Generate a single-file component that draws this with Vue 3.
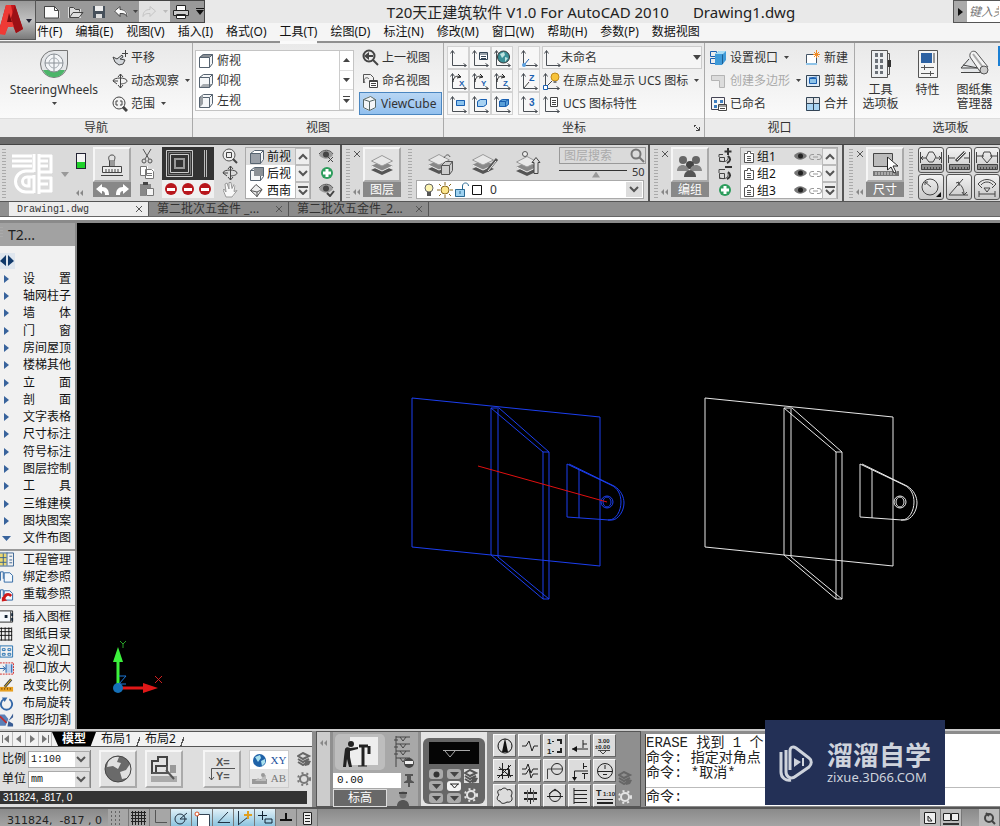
<template>
  <div class="app">
    <header class="titlebar">
      <button class="app-btn" aria-label="AutoCAD"><Icon name="acad" /></button>
      <div class="quick">
        <button aria-label="新建"><Icon name="newDoc" /></button>
        <button aria-label="打开"><Icon name="open" /></button>
        <button aria-label="保存"><Icon name="save" /></button>
        <button aria-label="放弃"><Icon name="undo" /></button>
        <Icon name="caret" />
        <span class="redo">
          <button aria-label="重做"><Icon name="redo" /></button>
          <Icon name="caretPale" />
        </span>
        <button aria-label="打印"><Icon name="print" /></button>
        <Icon name="caretBar" />
      </div>
      <h1 class="title">
        <span>T20天正建筑软件 V1.0 For AutoCAD 2010</span>
        <span>Drawing1.dwg</span>
      </h1>
      <div class="help-search">
        <button aria-label="展开"><Icon name="right" /></button>
        <input type="text" placeholder="键入关键字" aria-label="搜索" />
      </div>
    </header>

    <nav class="menubar">
      <a
        v-for="m in menus"
        :key="m"
        href="#"
        :class="{ open: m === '工具(T)' }"
        >{{ m }}</a
      >
    </nav>

    <section class="ribbon">
      <div class="panel nav-panel">
        <div class="panel-body">
          <button class="big wheel">
            <Icon name="wheel" />
            <span>SteeringWheels</span>
            <Icon name="caret" />
          </button>
          <div class="rows">
            <button class="row"><Icon name="pan" />平移</button>
            <button class="row">
              <Icon name="orbit" />动态观察<Icon name="caret" />
            </button>
            <button class="row">
              <Icon name="extents" />范围<Icon name="caret" />
            </button>
          </div>
        </div>
        <h2>导航</h2>
      </div>

      <div class="panel view-panel">
        <div class="panel-body">
          <div class="gallery">
            <ul>
              <li v-for="v in views" :key="v.name">
                <Icon :name="v.icon" />{{ v.name }}
              </li>
            </ul>
            <div class="gallery-scroll">
              <button aria-label="上"><Icon name="up" /></button>
              <button aria-label="下"><Icon name="down" /></button>
              <button aria-label="更多"><Icon name="more" /></button>
            </div>
          </div>
          <div class="rows">
            <button class="row"><Icon name="prevView" />上一视图</button>
            <button class="row"><Icon name="namedView" />命名视图</button>
            <button class="row active"><Icon name="cube" />ViewCube</button>
          </div>
        </div>
        <h2>视图</h2>
      </div>

      <div class="panel ucs-panel">
        <div class="panel-body">
          <div class="ucs-grid">
            <button v-for="n in ucsGrid" :key="n" :aria-label="n">
              <Icon :name="n" />
            </button>
          </div>
          <div class="ucs-col">
            <button v-for="n in ucsCol" :key="n" :aria-label="n">
              <Icon :name="n" />
            </button>
          </div>
          <div class="rows">
            <label class="row ucs-select">
              <Icon name="ucsPlain" />
              <select aria-label="UCS">
                <option>未命名</option>
              </select>
              <Icon name="caretBig" />
            </label>
            <button class="row">
              <Icon name="ucsBulb" />在原点处显示 UCS 图标<Icon name="caret" />
            </button>
            <button class="row"><Icon name="ucsProps" />UCS 图标特性</button>
          </div>
        </div>
        <h2>坐标<Icon name="launcher" /></h2>
      </div>

      <div class="panel port-panel">
        <div class="panel-body">
          <div class="rows">
            <button class="row">
              <Icon name="portSet" />设置视口<Icon name="caret" />
            </button>
            <button class="row off">
              <Icon name="portPoly" />创建多边形<Icon name="caret" />
            </button>
            <button class="row"><Icon name="portNamed" />已命名</button>
          </div>
          <div class="rows">
            <button class="row"><Icon name="portNew" />新建</button>
            <button class="row"><Icon name="portClip" />剪裁</button>
            <button class="row"><Icon name="portJoin" />合并</button>
          </div>
        </div>
        <h2>视口</h2>
      </div>

      <div class="panel palette-panel">
        <div class="panel-body">
          <button class="big">
            <Icon name="toolPalette" /><span>工具<br />选项板</span>
          </button>
          <button class="big"><Icon name="props" /><span>特性</span></button>
          <button class="big">
            <Icon name="sheets" /><span>图纸集<br />管理器</span>
          </button>
          <Icon name="blueEdge" />
        </div>
        <h2>选项板</h2>
      </div>
    </section>

    <section class="strip">
      <div class="dock dock-main">
        <i class="grip"></i>
        <div class="logo">
          <Icon name="teLogo" />
          <Icon name="caretGray" />
          <div class="logo-side">
            <Icon name="toggle" />
            <Icon name="collapse" />
          </div>
        </div>
        <div class="tile">
          <button class="face" aria-label="格式刷"><Icon name="stamp" /></button>
          <div class="tile-label arrows">
            <button aria-label="撤销"><Icon name="undoW" /></button>
            <button aria-label="恢复"><Icon name="redoW" /></button>
          </div>
        </div>
        <div class="icon-col">
          <button v-for="n in ['cut', 'copy', 'paste']" :key="n" :aria-label="n">
            <Icon :name="n" />
          </button>
        </div>
        <div class="hide-box">
          <Icon name="hideBox" />
          <div><Icon v-for="n in 3" :key="n" name="stop" /></div>
        </div>
        <div class="icon-col">
          <button
            v-for="n in ['zoomWin', 'orbit', 'hand']"
            :key="n"
            :aria-label="n"
          >
            <Icon :name="n" />
          </button>
        </div>
        <div class="mini-list">
          <ul>
            <li><Icon name="cubeFront" />前视</li>
            <li><Icon name="cubeBack" />后视</li>
            <li><Icon name="cubeIso" />西南</li>
          </ul>
          <div class="mini-scroll">
            <button aria-label="上"><Icon name="chevUp" /></button>
            <button aria-label="下"><Icon name="chevDown" /></button>
            <button aria-label="更多"><Icon name="chevMore" /></button>
          </div>
        </div>
        <div class="icon-col">
          <button v-for="n in ['eyeX', 'plus', 'eyeV']" :key="n" :aria-label="n">
            <Icon :name="n" />
          </button>
        </div>
      </div>

      <div class="dock dock-layer">
        <i class="grip"></i>
        <div class="dock-ctl"><Icon name="close" /><Icon name="collapse" /></div>
        <div class="tile">
          <button class="face" aria-label="图层"><Icon name="layers" /></button>
          <div class="tile-label">图层</div>
        </div>
        <i class="grip"></i>
        <div class="layer-body">
          <div class="layer-top">
            <button aria-label="图层转换"><Icon name="layerCube" /></button>
            <button aria-label="图层刷"><Icon name="layerBrush" /></button>
            <button aria-label="图层上移"><Icon name="layerUp" /></button>
            <div class="layer-find">
              <label>
                <input type="text" placeholder="图层搜索" aria-label="图层搜索" />
                <Icon name="search" />
              </label>
              <div class="slider">
                <input type="range" value="55" aria-label="淡入度" />
                <span>50</span>
              </div>
            </div>
          </div>
          <label class="layer-select">
            <Icon name="layerState" />
            <select aria-label="当前图层">
              <option>0</option>
            </select>
            <span class="drop"><Icon name="chevDown" /></span>
          </label>
        </div>
      </div>

      <div class="dock dock-group">
        <i class="grip"></i>
        <div class="dock-ctl"><Icon name="close" /><Icon name="collapse" /></div>
        <div class="tile">
          <button class="face" aria-label="编组"><Icon name="people" /></button>
          <div class="tile-label">编组</div>
        </div>
        <div class="icon-col">
          <button
            v-for="n in ['groupAdd', 'groupSub', 'plus']"
            :key="n"
            :aria-label="n"
          >
            <Icon :name="n" />
          </button>
        </div>
        <div class="mini-list groups">
          <ul>
            <li v-for="n in 3" :key="n">
              <Icon name="note" /><span>组{{ n }}</span>
              <Icon name="eye" /><Icon name="link" />
            </li>
          </ul>
          <div class="mini-scroll">
            <button aria-label="上"><Icon name="chevUp" /></button>
            <button aria-label="下"><Icon name="chevDown" /></button>
            <button aria-label="更多"><Icon name="chevMore" /></button>
          </div>
        </div>
      </div>

      <div class="dock dock-dim">
        <i class="grip"></i>
        <div class="dock-ctl"><Icon name="close" /><Icon name="collapse" /></div>
        <div class="tile">
          <button class="face" aria-label="尺寸"><Icon name="ruler" /></button>
          <div class="tile-label">尺寸</div>
        </div>
        <i class="grip"></i>
        <div class="dim-grid">
          <button v-for="n in dims" :key="n" :aria-label="n">
            <Icon :name="n" />
          </button>
        </div>
      </div>
    </section>

    <nav class="file-tabs">
      <a
        v-for="f in files"
        :key="f.name"
        href="#"
        :class="{ current: f.current }"
        ><span>{{ f.name }}</span
        ><Icon name="close"
      /></a>
    </nav>

    <main class="work">
      <aside class="side">
        <h2><i class="grip"></i>T2...</h2>
        <button class="flip" aria-label="切换"><Icon name="flip" /></button>
        <ul class="g16">
          <li v-for="(s, i) in screenMenu" :key="s">
            <Icon :name="i === screenMenu.length - 1 ? 'triDown' : 'triRight'" />
            <a href="#">{{ s }}</a>
          </li>
        </ul>
        <ul class="g3">
          <li v-for="s in refs" :key="s.name">
            <Icon :name="s.icon" /><a href="#">{{ s.name }}</a>
          </li>
        </ul>
        <ul class="g7">
          <li v-for="s in layouts" :key="s.name">
            <Icon :name="s.icon" /><a href="#">{{ s.name }}</a>
          </li>
        </ul>
      </aside>
      <div class="canvas">
        <svg class="drawing" fill="none">
          <defs>
            <g id="part">
              <path d="M335 175 523 194V343L335 324Z" />
              <path d="M414 185h8l50 44v147h-6L414 332Z" />
              <path d="M421 186V334M466 376V229h6M414 185l52 44M421 334l51 42" />
              <path
                d="M490 241 534 262C541 265 544 272 544 279C544 288 539 297 532 297L490 294ZM502 247V295"
              />
              <path
                d="M492 241 537 263C544 267 547 274 547 280C547 288 541 297 535 297H531"
              />
              <circle cx="530" cy="279" r="6" />
              <ellipse cx="530" cy="279" rx="4" ry="5" />
            </g>
          </defs>
          <use href="#part" stroke="#1c3ff0" />
          <use href="#part" x="293" stroke="#e8e8e8" />
          <path d="M401 243 530 279" stroke="#e01010" />
        </svg>
        <svg class="ucs" width="60" height="60">
          <path d="M12 46V16" stroke="#3cf03c" stroke-width="3" />
          <path d="M12 6 7 21h10z" fill="#3cf03c" />
          <path d="M12 47h30" stroke="#e01818" stroke-width="3" />
          <path d="M52 47 37 42v10z" fill="#e01818" />
          <circle cx="12" cy="47" r="5" fill="#1570b8" />
          <path d="M13 35h7l-7 8h7" fill="none" stroke="#1c78d8" />
          <path d="m14 0 3 3 3-3m-3 3v4" fill="none" stroke="#28a028" />
          <path d="m49 35 7 7m0-7-7 7" fill="none" stroke="#d02020" />
        </svg>
      </div>
    </main>

    <section class="bottom">
      <div class="left-dock">
        <nav class="layout-tabs">
          <button v-for="n in ['first', 'prev', 'next', 'last']" :key="n" :aria-label="n">
            <Icon :name="n" />
          </button>
          <a href="#" class="model">模型</a>
          <a href="#">布局1</a>
          <a href="#">布局2</a>
        </nav>
        <div class="scale-bar">
          <div class="combos">
            <label
              >比例
              <span class="combo"
                ><select>
                  <option>1:100</option></select
                ><Icon name="chevDown" /></span
            ></label>
            <label
              >单位
              <span class="combo"
                ><select>
                  <option>mm</option></select
                ><Icon name="chevDown" /></span
            ></label>
          </div>
          <button class="face" aria-label="全局"><Icon name="globe" /></button>
          <button class="face" aria-label="图面"><Icon name="plot" /></button>
          <i class="grip"></i>
          <button class="face" aria-label="坐标"><Icon name="xy" /></button>
          <div class="quad">
            <button aria-label="世界"><Icon name="globeSmall" /></button>
            <button class="blue">XY</button>
            <button aria-label="图像"><Icon name="photo" /></button>
            <button>AB</button>
          </div>
          <div class="quad-side"><Icon name="stack" /><Icon name="gear" /></div>
        </div>
        <output class="coords">311824, -817, 0</output>
      </div>

      <div class="elev-dock">
        <div class="elev-ctl"><Icon name="collapse" /></div>
        <div class="elev">
          <button class="screen" aria-label="标高"><Icon name="worker" /></button>
          <Icon name="levels" />
          <input type="text" value="0.00" aria-label="标高值" />
          <Icon name="pin" />
          <div class="elev-name">标高</div>
          <Icon name="bust" />
        </div>
        <div class="pad">
          <div class="pad-case">
            <Icon name="padScreen" />
            <div class="pad-keys">
              <button
                v-for="n in 6"
                :key="n"
                :class="{ lit: n === 4 }"
                :aria-label="'标高样式' + n"
              >
                <Icon :name="n === 1 ? 'dot' : n === 4 ? 'triOpen' : 'triKey'" />
              </button>
            </div>
            <div class="pad-side">
              <Icon name="stackPale" /><Icon name="gearPale" />
            </div>
          </div>
        </div>
        <div class="symbols">
          <button v-for="n in symbols" :key="n" :aria-label="n">
            <Icon :name="n" />
          </button>
        </div>
        <div class="symbols-side"><Icon name="stack" /><Icon name="gearPale" /></div>
      </div>

      <div class="command">
        <div class="history">
          <p>ERASE 找到 1 个</p>
          <p>命令: 指定对角点</p>
          <p>命令: *取消*</p>
        </div>
        <label class="prompt">命令: <input type="text" /></label>
      </div>

      <div class="brand">
        <Icon name="brand" />
        <div>
          <strong>溜溜自学</strong>
          <span>zixue.3D66.COM</span>
        </div>
      </div>
    </section>

    <footer class="status">
      <output>311824,&nbsp; -817 , 0</output>
      <button
        v-for="s in toggles"
        :key="s.icon"
        :class="{ on: s.on }"
        :aria-label="s.icon"
      >
        <Icon :name="s.icon" />
      </button>
      <div class="status-right">
        <button aria-label="模型"><Icon name="stModel" /></button>
        <button aria-label="快速查看"><Icon name="stQuick" /></button>
        <span></span>
        <button aria-label="注释"><Icon name="stNote" /></button>
      </div>
    </footer>
  </div>
</template>

<script setup>
import { h } from "vue";

const menus = [
  "件(F)",
  "编辑(E)",
  "视图(V)",
  "插入(I)",
  "格式(O)",
  "工具(T)",
  "绘图(D)",
  "标注(N)",
  "修改(M)",
  "窗口(W)",
  "帮助(H)",
  "参数(P)",
  "数据视图",
];
const views = [
  { name: "俯视", icon: "cubeTop" },
  { name: "仰视", icon: "cubeBottom" },
  { name: "左视", icon: "cubeLeft" },
];
const ucsGrid = [
  "ucsPlain",
  "ucsNamed",
  "ucsWorld",
  "ucsX",
  "ucsY",
  "ucsZ",
  "ucsView",
  "ucsFace",
  "ucsObj",
];
const ucsCol = ["ucsOrigin", "ucsZaxis", "ucs3"];
const dims = ["dim1", "dim2", "dim3", "dim4", "dim5", "dim6"];
const files = [
  { name: "Drawing1.dwg", current: true },
  { name: "第二批次五金件 _..." },
  { name: "第二批次五金件_2..." },
];
const screenMenu = [
  "设　　置",
  "轴网柱子",
  "墙　　体",
  "门　　窗",
  "房间屋顶",
  "楼梯其他",
  "立　　面",
  "剖　　面",
  "文字表格",
  "尺寸标注",
  "符号标注",
  "图层控制",
  "工　　具",
  "三维建模",
  "图块图案",
  "文件布图",
];
const refs = [
  { name: "工程管理", icon: "sProject" },
  { name: "绑定参照", icon: "sBind" },
  { name: "重载参照", icon: "sReload" },
];
const layouts = [
  { name: "插入图框", icon: "sFrame" },
  { name: "图纸目录", icon: "sTable" },
  { name: "定义视口", icon: "sPort" },
  { name: "视口放大", icon: "sZoom" },
  { name: "改变比例", icon: "sScale" },
  { name: "布局旋转", icon: "sRotate" },
  { name: "图形切割", icon: "sCut" },
];
const symbols = [
  "y1", "y2", "y3", "y4", "y5",
  "y6", "y7", "y8", "y9", "y10",
  "y11", "y12", "y13", "y14", "y15",
];
const toggles = [
  { icon: "stSnap" },
  { icon: "stGrid" },
  { icon: "stOrtho" },
  { icon: "stPolar", on: true },
  { icon: "stOsnap", on: true },
  { icon: "stTrack", on: true },
  { icon: "stDucs", on: true },
  { icon: "stDyn", on: true },
  { icon: "stLw" },
  { icon: "stQp" },
];

// line helpers
const ln = (d, c = "#444", w = 1) =>
  `<path d="${d}" fill="none" stroke="${c}" stroke-width="${w}"/>`;
const fl = (d, c = "#444") => `<path d="${d}" fill="${c}"/>`;
const tx = (x, y, s, t, c = "#222") =>
  `<text x="${x}" y="${y}" font-size="${s}" font-weight="bold" fill="${c}" font-family="Liberation Sans, sans-serif">${t}</text>`;

const axes = ln("M3.5 2v14.5H17M1.5 4.5l2-3 2 3M14.5 14.5l3 2-3 2", "#4a4f55");
const smallCube = (a, b, c) =>
  fl("M1 4l4-3h10v10l-4 4H1z", "#f4f6f8") +
  fl("M1 4.5 5 1h10l-4 3.5z", a) +
  fl("M1.5 4.5h10V15h-10z", b) +
  fl("M1 15l4-4h10l-4 4z", c) +
  ln("M1.5 4.5h10v10h-10zM1.5 4.5l4-3h9v9l-3 4M11.5 4.5l3-3", "#566370");
const layerStack = (x = 0, y = 0) =>
  `<g transform="translate(${x} ${y})">` +
  fl("M1 16 12 21 23 16 12 11z", "#555") +
  fl("M1 12 12 17 23 12 12 7z", "#888") +
  ln("M1.5 12 12 17 22.5 12", "#eee") +
  fl("M1 7 12 12 23 7 12 1z", "#e8e8e8") +
  ln("M1.5 7 12 12 22.5 7 12 1.5z", "#999") +
  "</g>";
const stackSmall = (c) =>
  ln("M1 4l5-3 6 3-6 3zM1 7l5 3 6-3M1 10l5 3 6-3", c, 2) +
  fl("M8 8l6 1-2 4-4 1z", c);
const gearBody = (c) =>
  `<circle cx="7" cy="7" r="4" fill="none" stroke="${c}" stroke-width="2"/>` +
  `<circle cx="7" cy="7" r="6" fill="none" stroke="${c}" stroke-width="2" stroke-dasharray="2 3"/>`;
const ruler = fl("M1 16h20v5H1z", "#8a8a8a") +
  ln("M1.5 15.5h20v5h-20zM4.5 18v2M7.5 18v2M10.5 18v2M13.5 18v2M16.5 18v2M19.5 18v2");
const eyeShape =
  fl("M1 6c4-6 11-6 14 0-4 5-10 5-14 0z", "#999") +
  '<circle cx="8" cy="5.5" r="3" fill="#444"/>' +
  ln("M1 5c4-5 11-5 14 0", "#555");
const page =
  fl("M2 2h7l4 4v8H2z", "#f2f7fc") + ln("M4.500 3.500h6l3 3v7h-9zM.5 12V2.500h3V10", "#2b64a0");

// [width, height, markup]
const icons = {
  acad: [
    36, 39,
    fl("M-2 33 6 4h9l8 24-7 4-3-7H8l-3 8z", "#c4161c") +
      fl("M6 4h5l4 21-3 1H8l-3 8-7-1z", "#ee3a35") +
      fl("M9 12l3 9H7z", "#7a0b0e") +
      fl("M15 4l8 24-7 4-5-15z", "#9c1015") +
      fl("M26 18h6l-3 4z", "#223"),
  ],
  newDoc: [18, 16, fl("M1.500 3h11l4 4v7h-15z", "#fbfbfb") + ln("M1.500 2.500h10l4 4v7.500h-14zM11.500 2.500v4h4", "#444")],
  open: [18, 16, fl("M1 3h5l2 2h6v9H1z", "#ddd") + ln("M2.500 13V3.500h4l2 2h4v2M2.500 13.500 6 8.500h10l-4 5z", "#444")],
  save: [16, 16, fl("M2 2h12v12H2z", "#46505a") + fl("M4 2h8v5H4z", "#eee") + fl("M5 10h6v4H5z", "#ddd")],
  undo: [16, 14, fl("M1 6l6-5v3c5 0 8 3 8 8-2-3-4-4-8-4v3z", "#fafafa") + ln("M1.500 6 7 1.500v3c5 0 7 3 7 7-2-3-4-3-7-3v3z", "#444")],
  redo: [16, 14, ln("M14.500 6 9 1.500v3c-5 0-7 3-7 7 2-3 4-3 7-3v3z", "#c4c4c4")],
  print: [18, 16, fl("M4 1h9v5H4z", "#fff") + fl("M1 6h16v6H1z", "#ccc") + fl("M4 10h10v5H4z", "#fff") + ln("M4.500 6V1.500h9V6M1.500 6.500h15v5h-15zM4.500 10.500h9v4h-9z", "#222")],
  caret: [5, 4, fl("M0 0h5L2.500 3z", "#444")],
  caretPale: [5, 4, fl("M0 0h5L2.500 3z", "#bbb")],
  caretGray: [8, 5, fl("M0 0h8L4 5z", "#999")],
  caretBig: [8, 5, fl("M0 0h8L4 5z", "#444")],
  caretBar: [8, 7, fl("M0 0h8v1H0zM0 2h8L4 7z", "#111")],
  up: [7, 4, fl("M0 4h7L3.500 0z", "#444")],
  down: [7, 4, fl("M0 0h7L3.500 4z", "#444")],
  more: [7, 7, fl("M0 0h7v1H0zM0 3h7L3.500 7z", "#444")],
  right: [5, 8, fl("M0 0v8l5-4z", "#111")],
  wheel: [
    30, 30,
    fl("M15 1h14v14A14 14 0 1 1 15 1z", "#e4e6e8") +
      ln("M15 1.500h13.500V15A13.500 13.500 0 1 1 15 1.500z", "#777") +
      fl("M4 21a12 12 0 0 0 22 0z", "#4db56a") +
      '<circle cx="15" cy="14" r="9" fill="#f4f6f8" stroke="#8a9096"/>' +
      ln("M15 5v18M6 14h18", "#8a9096") +
      '<circle cx="15" cy="14" r="5" fill="none" stroke="#a8aeb4"/>',
  ],
  pan: [16, 16, fl("M1 7l4 1 6-3 2 6-4 4-5-1z", "#d4d8dc") + ln("M1 7l4 2 5-4 1 2-3 2 5 1-2 4-4 1-4-3zM13.500 0v7M10 3.500h6", "#444")],
  orbit: [16, 16, ln("M8.500 1v14M6 4l2.500-3L11 4M6 12l2.500 3 2.500-3M1 8c0-4 14-4 14 0 0 2-4 3-7 3M1 8l4 3M1 8h5", "#444")],
  extents: [16, 16, '<circle cx="7" cy="7" r="6" fill="#f2f2f2" stroke="#444"/>' + ln("M5 4v2H3M9 4v2h2M5 10V8H3M9 10V8h2") + ln("M11 11l4 4", "#444", 3)],
  cubeTop: [16, 16, smallCube("#8b9096", "#fff", "none")],
  cubeBottom: [16, 16, smallCube("none", "none", "#a4a9ae")],
  cubeLeft: [16, 16, smallCube("none", "none", "none") + fl("M2 5l3-3v9l-3 3z", "#9a9fa4")],
  cubeFront: [16, 16, smallCube("#fff", "#9aa0a8", "none")],
  cubeBack: [16, 16, smallCube("none", "none", "none") + fl("M5 2h9v8H5z", "#8a9096")],
  cubeIso: [16, 15, fl("M1 7 7 1l7 6-6 7z", "#eee") + ln("M1.500 7.500 7 1.500l6 5-5 7zM1.500 7.500 8 9l5-2.500M8 9v5", "#555")],
  prevView: [18, 17, '<circle cx="8" cy="7" r="5.500" fill="none" stroke="#444" stroke-width="2"/>' + fl("M3 7l5-4v3h4v2H8v3z") + ln("M12 11l5 5", "#444", 2)],
  namedView: [18, 17, ln("M2.500 11V2.500h7l3 3V8M4 11c-3-4 2-7 4-4", "#555", 1) + fl("M8 8h9v8H8z", "#fff") + ln("M8.500 8.500h8v7h-8zM10 11.500h5M10 13.500h5M8 9.500h9")],
  cube: [17, 17, fl("M2 4l7-3 6 3v9l-7 3-6-3z", "#f4f6f8") + ln("M2.500 4.500l7-3 5 3v8l-6 3-6-3zM2.500 4.500l6 2 6-2M8.500 6.500v9", "#566")],
  ucsPlain: [18, 18, axes],
  ucsNamed: [18, 18, axes + fl("M8 3h9v8H8z", "#fff") + ln("M8.500 3.500h8v7h-8zM8 5h9M10 7.500h5M10 9.500h5", "#345")],
  ucsWorld: [18, 18, axes + '<circle cx="10.500" cy="8" r="6" fill="#3a8f96" stroke="#333"/>' + fl("M7 5l4-2 1 3-3 3zM12 8l3 1-3 4z", "#bfe3e0")],
  ucsX: [18, 18, axes + ln("M4 10C4 5 8 3 11 5M9 2l3 3-4 1", "#222") + tx(10, 14, 8, "X", "#1a5fb0")],
  ucsY: [18, 18, axes + ln("M4 10C4 5 8 3 11 5M9 2l3 3-4 1", "#222") + tx(10, 14, 8, "Y", "#1a5fb0")],
  ucsZ: [18, 18, axes + ln("M4 10C4 5 8 3 11 5M9 2l3 3-4 1", "#222") + tx(10, 14, 8, "Z", "#1a5fb0")],
  ucsView: [18, 18, axes + fl("M7 5h9v6H7z", "#8cc4ee") + ln("M7.500 5.500h8v5h-8z", "#1a5fb0")],
  ucsFace: [18, 18, axes + fl("M6 6l3-2h7v5l-3 3H6z", "#a8d2f2") + ln("M6.500 6.500l3-2h6v5l-3 2h-6z", "#1a5fb0")],
  ucsObj: [18, 18, axes + fl("M6 6l3-2h7v5l-3 3H6z", "#5aa0d8") + ln("M6.500 6.500l3-2h6v5l-3 2h-6zM6.500 6.500h6v5M12.500 6.500l3-2", "#1a5fb0")],
  ucsOrigin: [18, 18, axes + ln("M9 10l-5 6", "#1a5fb0") + '<circle cx="4" cy="16" r="2" fill="#5aa0e0"/>'],
  ucsZaxis: [18, 18, axes + ln("M4 16l5-6") + tx(9, 9, 9, "Z", "#1a5fb0")],
  ucs3: [18, 18, axes + tx(9, 11, 10, "3", "#1a5fb0")],
  ucsBulb: [18, 18, axes + ln("M5 14l5-5") + '<circle cx="13" cy="5" r="4" fill="#f7c33a" stroke="#c08a1a"/>' + fl("M11.500 9h3v2h-3z", "#777") + fl("M1 14h5v4H1z", "#fff") + ln("M1.500 13.500h4v4h-4z", "#1a5fb0")],
  ucsProps: [18, 18, axes + fl("M8 2h8v10H8z", "#fff") + ln("M8.500 2.500h7v9h-7zM10 5.500h4M10 7.500h4M10 9.500h4")],
  launcher: [6, 6, ln("M0 .5h2M.5 0v2M2 2l3 3M5.500 2v3.500H2")],
  portSet: [17, 16, ln("M.5 1.500h6v5h-6zM.5 8.500h6v5h-6z", "#1a5fb0") + fl("M5 4l4-3h7v9l-4 5H5z", "#3f9ad8") + fl("M5 4l4-3h7l-3 3z", "#a8dcf6") + ln("M12.500 4.500V14", "#1c5f94")],
  portPoly: [17, 16, fl("M1 2h14v12h-5V7H1z", "#dcdcdc") + ln("M1.500 2.500h13v12h-5v-7h-8z", "#b4b4b4")],
  portNamed: [17, 16, ln("M1.500 1.500h13v12h-13z", "#445") + fl("M4 4h3v3H4zM10 4h3v3h-3zM4 9h3v3H4z", "#3f7fc0") + fl("M8 8h9v8H8z", "#fff") + ln("M8.500 8.500h8v6h-8zM8 10h9M10 12.500h5")],
  portNew: [16, 16, fl("M1 4h11v11H1z", "#fff") + ln("M1.500 4.500h10v10h-10z", "#456") + fl("M1 13h11v2H1z", "#8ec3e8") + ln("M11.500 0v8M8 4.500h7M9 2l5 5M14 2 9 7", "#f08a24")],
  portClip: [16, 16, fl("M1 2h14v12H1z", "#dceaf6") + ln("M1.500 2.500h13v11h-13z", "#345") + fl("M5 6h7v5H5z", "#8ec3e8") + ln("M4.500 5.500h7v5h-7zM4 5l8-1", "#1a5fb0")],
  portJoin: [16, 16, fl("M1 1h14v6H1z", "#dfe3e6") + fl("M1 8h14v7H1z", "#a9d4f2") + ln("M1.500 1.500h13v13h-13zM1 7.500h14M8.500 1v13", "#345")],
  toolPalette: [22, 30, fl("M2 1h16v28H2z", "#eceef0") + ln("M1.500 1.500h16v27h-16zM17.500 4.500h2v21h-2", "#555") + fl("M5 4h3v4H5zM10 4h3v4h-3zM5 10h3v4H5zM10 10h3v4h-3zM5 16h3v4H5zM10 16h3v4h-3zM5 22h3v3H5zM10 22h3v3h-3z", "#6b7178") + fl("M18 11h3v7h-3z", "#333")],
  props: [22, 30, fl("M1 1h20v28H1z", "#f4f4f4") + ln("M1.500 1.500h19v27h-19zM4 18.500h13M4 24.500h13M7.500 16v5M13.500 22v5", "#555") + fl("M4 4h11v10H4z", "#2d62a3") + fl("M16 4h2v10h-2z", "#999")],
  sheets: [
    30, 30,
    fl("M1 19 9 8l12 13-5 3H5z", "#e4e6e8") +
      ln("M9 10 1 19h17M3 16l15 3M1 23.500h22") +
      fl("M10 8c-1-5 3-7 6-5l12 15-1 5-6 1z", "#f4f4f4") +
      ln("M21 24 10 8c-1-5 3-7 6-5l12 15", "#555") +
      ln("M13 5l12 16", "#aaa", 2) +
      '<circle cx="24" cy="21" r="4" fill="#ccc" stroke="#555"/>',
  ],
  blueEdge: [6, 20, fl("M0 0h6v20H0z", "#1a7fd4")],
  teLogo: [
    42, 42,
    ln("M0 3h20M0 8h20M22 1v18M27 3h13M27 8h9M27 13h9M27 19h13M27 25h13M27 31h9M27 38h13M22 22v18", "#fff", 3) +
      ln("M39 2v18M39 24v15M27 1v40", "#fff", 3) +
      ln("M0 13h20M22 18h-8a10 10 0 0 0 0 21h8M22 24h-7a4 4 0 0 0 0 9h2v-9", "#fff", 3),
  ],
  toggle: [10, 16, fl("M0 0h10v16H0z", "#223") + fl("M1 1h8v8H1z", "#f4f4f4") + fl("M1 9h8v6H1z", "#1fd02a")],
  collapse: [8, 6, fl("M3 0v6L0 3zM7 0v6L4 3z", "#888")],
  close: [8, 8, ln("M1 1l6 6M7 1 1 7", "#555")],
  stamp: [26, 26, fl("M4 15h18v6H4z", "#eee") + ln("M10.500 14V9c-2-4 0-6 2.500-6s4 2 2 6v5M3.500 14.500h19v6h-19zM2 23.500h22M7 20v-3M10 20v-3M13 20v-3M16 20v-3M19 20v-3", "#444") + fl("M11 8h4v6h-4z", "#999")],
  undoW: [14, 12, fl("M0 5l6-5v3c5 0 7 3 7 8h-4c0-3-1-4-3-4v3z", "#fff")],
  redoW: [14, 12, fl("M14 5 8 0v3C3 3 1 6 1 11h4c0-3 1-4 3-4v3z", "#fff")],
  cut: [14, 16, ln("M3 1l6 10M11 1 5 11", "#555", 1) + '<circle cx="4" cy="13" r="2" fill="none" stroke="#555"/><circle cx="10" cy="13" r="2" fill="none" stroke="#555"/>'],
  copy: [16, 15, fl("M1 1h8v10H1zM6 4h9v10H6z", "#fff") + ln("M1.500 1.500h6v9h-6zM6.500 4.500h6l2 2v7h-8zM8 8.500h5M8 10.500h5", "#777")],
  paste: [16, 15, fl("M1 2h11v12H1z", "#888") + fl("M4 0h5v3H4z", "#444") + fl("M7 6h8v8H7z", "#f4f4f4") + ln("M7.500 6.500h7v7h-7z", "#777")],
  hideBox: [52, 33, fl("M0 0h52v33H0z", "#333") + ln("M4.500 3.500h26v26h-26zM8.500 7.500h18v18h-18z", "#ccc", 1) + ln("M6.500 5.500h22v22h-22z", "#777") + ln("M13 12h9v9h-9z", "#999", 2) + ln("M42.500 3v27M44.500 3v27", "#bbb")],
  stop: [12, 12, '<circle cx="6" cy="6" r="6" fill="#b8161c"/>' + fl("M2 5h8v3H2z", "#fff")],
  zoomWin: [18, 16, '<circle cx="8" cy="7" r="6" fill="#eee" stroke="#555"/>' + ln("M5.500 4.500h5v5h-5z") + ln("M12 11l4 4", "#444", 2)],
  hand: [16, 16, fl("M4 15 0 8l2-1 2 3L3 2l2-1 2 6V0h2l1 7 2-5 2 1-2 7 3-2-4 7z", "#f8f8f8") + ln("M4 15 1 8l1-1 2 3L3 2l2-1 2 6V.500h2l1 6 2-4 1 1-1 6 3-1-5 6.500z", "#999")],
  chevUp: [10, 7, ln("M1 6l4-4 4 4", "#555", 2)],
  chevDown: [10, 7, ln("M1 1l4 4 4-4", "#555", 2)],
  chevMore: [10, 9, ln("M0 1h10M1 4l4 4 4-4", "#555", 2)],
  eyeX: [17, 14, eyeShape + ln("M10 8l5 5M15 8l-5 5")],
  eyeV: [17, 14, eyeShape + ln("M9 10l3 3 4-5", "#444", 2)],
  plus: [12, 12, '<circle cx="6" cy="6" r="6" fill="#2d9d5c"/>' + ln("M6 2v8M2 6h8", "#fff", 3)],
  layers: [26, 26, layerStack(1, 2)],
  layerCube: [28, 26, layerStack(0, 2) + fl("M14 14l4-4h8v9l-3 5h-9z", "#ccc") + ln("M14.500 14.500h8v9h-8zM14.500 14.500l4-4h7v9l-3 4M22.500 14.500l3-4M17 7c2-4 5-4 6-1", "#555")],
  layerBrush: [28, 26, layerStack(0, 2) + ln("M26 8 16 20", "#555", 3) + ln("M25 10 17 20", "#eee")],
  layerUp: [28, 26, layerStack(0, 4) + fl("M21 6l5 6h-3v11h-4V12h-3z", "#ddd") + ln("M21 6.500l4 5h-2v11h-4v-11h-2z", "#444") + '<circle cx="10" cy="3" r="2.500" fill="#eee" stroke="#555"/>'],
  search: [15, 15, '<circle cx="6" cy="6" r="4.500" fill="none" stroke="#777" stroke-width="2"/>' + ln("M9 9l5 5", "#777", 2)],
  layerState: [
    66, 16,
    '<circle cx="5" cy="6" r="4" fill="#fdf5b0" stroke="#666"/>' + fl("M3 10h4v4H3z", "#555") +
      '<circle cx="21" cy="8" r="4" fill="#fce68c" stroke="#8a6a20"/>' + ln("M21 0v3M21 13v3M13 8h3M26 8h3M15 2l2 2M25 12l2 2M27 2l-2 2M17 12l-2 2", "#8a6a20") +
      fl("M31 7h10v8H31z", "#9fd2f0") + ln("M31.500 7.500h9v7h-9zM36 9v3M38.500 7V4c0-4 6-4 6 0", "#2a6a94") +
      ln("M48.500 3.500h9v9h-9z", "#111"),
  ],
  people: [28, 26, '<circle cx="7" cy="8" r="4" fill="#666"/><circle cx="20" cy="8" r="4" fill="#666"/><circle cx="14" cy="13" r="4" fill="#444"/>' + fl("M1 19c0-8 11-8 12 0zM14 19c0-8 12-8 12 0z", "#888") + fl("M8 25c0-9 12-9 12 0z", "#555")],
  groupAdd: [16, 16, ln("M2 9V6.500h4M3 13c6 2 9-1 8-5M2.500 9.500h5v4h-5z", "#444") + ln("M11 0v7M7.500 3.500h7M11 8c3 2 3 5-1 7", "#333", 2)],
  groupSub: [16, 16, ln("M2 8V4.500h6M3 13c6 2 9-1 8-5M2.500 8.500h5v5h-5z", "#444") + ln("M8 2h7M11 7c3 2 3 5-1 7", "#333", 2)],
  note: [11, 12, fl("M1 1h9v11H1z", "#fff") + ln("M.5 2.500h3v-2h3v2h3v9h-9zM3 5.500h4M3 7.500h4M3 9.500h4", "#555")],
  eye: [13, 9, fl("M0 4c3-5 9-5 13 0-4 5-10 5-13 0z", "#777") + '<circle cx="6.500" cy="4" r="2.500" fill="#222"/>'],
  link: [13, 8, ln("M5 6.500H3a2 2 0 0 1 0-5h2M8 1.500h2a2 2 0 0 1 0 5H8M4 4h5", "#999", 1)],
  ruler: [30, 26, fl("M4 2h19v13H4z", "#bbb") + ln("M3.500 1.500h19v13h-19z") + fl("M3 19h26v5H3z", "#777") + ln("M6 20v3M9 20v3M12 20v3M15 20v3M18 20v3M21 20v3M24 20v3", "#ddd") + fl("M17 4v15l4-4 3 6 3-1-3-6h5z", "#fff") + ln("M17.500 5v13l3.500-3 3 6 2-1-3-6h5z", "#222")],
  dim1: [22, 22, ruler + ln("M.5 3v11M21.500 3v11M1 9h5M16 9h5M6 9l3-6h4l3 5-3 5H9zM3 7L1 9l2 2M19 7l2 2-2 2")],
  dim2: [22, 22, ruler + ln("M.5 6v8M21.500 3v11M1 9h6M16 9h5") + ln("M8 12l9-9", "#444", 3) + ln("M9 11l8-8", "#eee")],
  dim3: [22, 22, ruler + ln("M.5 3v11M21.500 3v11M1 7h7M14 7h7M8 3h6l2 5-5 6-5-6z")],
  dim4: [22, 22, '<circle cx="10" cy="11" r="8" fill="none" stroke="#444"/>' + ln("M5 6l6 5M5 9V6h3") + fl("M16 21h5v-5z", "#111")],
  dim5: [22, 22, ln("M1 19h19M1 19 15 3M10 7c5 3 6 8 6 12M14 16l2 3 3-3M8 7l3-1v4")],
  dim6: [22, 22, ln("M2 8c5-6 13-6 18 0M5 9c3-4 9-4 12 0M2 8l4 4M20 8l-4 4M8 12h6l-3 4zM3 18h16M3 15v6M19 15v6")],
  flip: [15, 16, fl("M0 0h15v16H0z", "#dfe6ee") + fl("M6 2v11L0 8zM8 2v11l6-5z", "#123a6a")],
  triRight: [14, 10, fl("M4 1v8l5-4z", "#38639c")],
  triDown: [14, 10, fl("M2 3h9L6.500 8z", "#38639c")],
  sProject: [15, 15, fl("M0 1h7v13H0z", "#ecd870") + ln("M0 .5h14.500v14H0M7.500 0v14M0 5.500h7M0 10.500h7M3.500 1v13M10 4h3M10 8h3M10 11h3", "#356090")],
  sBind: [15, 15, page],
  sReload: [15, 15, page + ln("M4 13c1-6 5-7 8-4", "#d01818", 3) + fl("M2 10l6 4-6 1z", "#d01818")],
  sFrame: [15, 15, fl("M0 1h14v13H0z", "#f4f8fc") + ln("M0 1.500h13.500v12H0M11.500 2v11", "#222", 1) + fl("M5 6h3v3H5zM12 4h2v3h-2zM12 9h2v3h-2z", "#123")],
  sTable: [15, 15, ln("M0 2h12M1.500 1v14M5.500 1v14M9.500 1v14M12.500 1v14M0 5.500h13M0 9.500h13M0 14.500h13", "#111")],
  sPort: [15, 15, ln("M0 1.500h13.500v12H0z", "#2270b0") + ln("M2.500 4.500h3v2h-3zM8.500 4.500h3v2h-3zM2.500 9.500h3v2h-3zM8.500 9.500h3v2h-3z", "#2270b0")],
  sZoom: [15, 15, fl("M6 3h8v9H6z", "#b8d0ee") + ln("M0 7.500h5M3 5l3 2.500L3 10M6.500 3v9M12.500 3v9", "#2260a8") + '<path d="M0 1.500h14.500v12H0" fill="none" stroke="#d02020" stroke-dasharray="2 1"/>'],
  sScale: [15, 15, fl("M0 9h14v5H0z", "#e8a020") + ln("M2 10v2M5 10v2M8 10v2M11 10v2", "#7a4a00") + ln("M5 9l7-8", "#444", 3) + ln("M5 9l7-8", "#f0c020")],
  sRotate: [15, 15, ln("M4 3a6 6 0 1 0 6 0", "#3468a8", 2) + fl("M2 1h6L5 6z", "#3468a8")],
  sCut: [15, 15, fl("M0 1h5l4 5-3 7H0z", "#5a80b8") + fl("M14 0v4l-5 4 5 3v3H8l1-6z", "#385c94") + ln("M0 3l7 7", "#c03030", 2)],
  first: [10, 10, ln("M1.500 1v8", "#777") + fl("M8 1v8L3 5z", "#777")],
  prev: [10, 10, fl("M7 1v8L2 5z", "#777")],
  next: [10, 10, fl("M3 1v8l5-4z", "#777")],
  last: [10, 10, ln("M8.500 1v8", "#777") + fl("M2 1v8l5-4z", "#777")],
  globe: [30, 30, '<circle cx="15" cy="15" r="13" fill="#6a6a6a"/>' + fl("M5 8c3-5 8-6 11-5l-2 5 4 1-3 6-5-3-6 1zM17 18l6-2 4-6c2 5 1 10-3 14l-5 1z", "#e0e0e0") + '<circle cx="15" cy="15" r="13" fill="none" stroke="#444"/>'],
  plot: [30, 30, fl("M2 22h26v6H2z", "#aaa") + ln("M3 7h6V3h9v9H7v7H3z", "#444", 2) + ln("M3 19h15V12M17 16l8 9", "#555", 2) + fl("M21 11h6v8h-6z", "#999")],
  xy: [30, 30, ln("M4.500 26V14.500H28M2 23l2.500 3L7 23", "#555") + tx(9, 12, 11, "X=", "#555") + tx(9, 26, 11, "Y=", "#555")],
  globeSmall: [15, 15, '<circle cx="7.500" cy="7.500" r="6.500" fill="#1f62a8"/>' + fl("M3 4l5-2 1 3-3 4zM9 8l4-2v4l-3 3z", "#a8e0ee")],
  photo: [15, 13, fl("M0 7h15v5H0z", "#999") + fl("M3 9l3-3 3 2 2-5h3v6z", "#bbb") + '<circle cx="11" cy="3" r="2" fill="#999"/>'],
  stack: [15, 14, stackSmall("#666")],
  stackPale: [15, 14, fl("M0 0h15v14H0z", "#ddd") + stackSmall("#555")],
  gear: [14, 14, gearBody("#777")],
  gearPale: [14, 14, gearBody("#e4e4e4")],
  worker: [44, 34, fl("M12 2h28v28H12z", "#eee") + '<circle cx="13" cy="9" r="3" fill="#222"/>' + fl("M7 14c1-2 3-2 5-1l8-1v2l-8 2v6l2 10h-3l-2-8-1 8H5l1-10z", "#222") + ln("M21 11h9M25 11v20M31 11v8", "#222", 3) + ln("M20 31h9", "#222")],
  levels: [22, 34, ln("M4 1v31M4 2h14M4 9h14M4 16h14M4 23h14M8 2l3 4 3-4M8 9l3 4 3-4M8 16l3 4 3-4M8 23l3 4 3-4M2 5h4M2 12h4M2 19h4", "#444", 1) + '<circle cx="17" cy="28" r="5" fill="#444"/>' + fl("M13 26h8v3h-8z", "#eee")],
  pin: [12, 14, fl("M2 1h8v2H8v4l3 2v1H7v4H5v-4H1V9l3-2V3H2z", "#555")],
  bust: [16, 16, '<circle cx="8" cy="5" r="3.500" fill="#777"/>' + fl("M2 16c0-8 12-8 12 0z", "#555") + ln("M4 3h8", "#444", 2)],
  padScreen: [50, 22, fl("M0 0h50v22H0z", "#050505") + ln("M14 8.500h27M16 9l5 6 5-6", "#aaa")],
  dot: [9, 7, '<circle cx="4.500" cy="3.500" r="3" fill="#333"/>'],
  triOpen: [9, 7, ln("M0 1h9M1 1l3.500 4L8 1", "#222")],
  triKey: [9, 7, fl("M0 1h9L4.500 6z", "#444")],
  y1: [20, 20, '<circle cx="10" cy="10" r="7" fill="none" stroke="#111"/>' + fl("M10 2l3 14H7z", "#111")],
  y2: [20, 20, ln("M2 10h4l3-5 3 10 2-5h4", "#222", 1)],
  y3: [20, 20, ln("M12 4h4v4M16 12v4h-4", "#222", 2) + tx(2, 8, 8, "1") + tx(2, 18, 8, "1") + ln("M7 5.500h2M7 15.500h2", "#222")],
  y4: [20, 20, ln("M2 13h16M13 12V4M13 8h4", "#222", 1) + fl("M2 13l5-3v6z", "#111")],
  y5: [20, 20, tx(3, 7, 6, "3.00") + tx(0, 13, 6, "±0.00") + ln("M3 14.500h12M5 15l3 3 3-3")],
  y6: [20, 20, ln("M2 14.500h16M7.500 2v16M3 17 16 4M4 6l12 10M3.500 8.500h11v6M13.500 4v13M7.500 8.500l6 6", "#222", 1)],
  y7: [20, 20, ln("M2 8h4l2-5 3 9 2-4h5M2 13h4l3-5 2 9 2-4h5", "#222", 1)],
  y8: [20, 20, '<circle cx="12" cy="8" r="5.500" fill="none" stroke="#222"/>' + ln("M2.500 18V8H18")],
  y9: [20, 20, ln("M4.500 18v-8H18M13.500 8V2M13 5.500h4M12 12.500h6M14.500 12v6", "#222", 1) + fl("M2 16h5l-2.500 4z", "#111")],
  y10: [20, 20, '<circle cx="10" cy="10" r="7.500" fill="none" stroke="#222"/>' + ln("M3 10.500h14M10 4v4M8 13.500h4", "#222")],
  y11: [20, 20, ln("M6 4c2-3 6-2 6 0 5-2 6 3 4 6 3 4-1 7-4 6-3 2-6 2-7-1-4 0-3-5-1-6-3-4 0-6 2-5z", "#222")],
  y12: [20, 20, ln("M10.500 2v6M10.500 12v6", "#222", 1) + ln("M4 7h13M4 13h13", "#222", 2) + ln("M7.500 4v6M13.500 4v6M7.500 10v6M13.500 10v6", "#666")],
  y13: [20, 20, '<circle cx="10" cy="10" r="5.500" fill="none" stroke="#222"/>' + ln("M2 10.500h16M4 8l6-5 6 5", "#222")],
  y14: [20, 20, ln("M4 2v16M4 4.500h13M4 8.500h13M4 12.500h13M4 16.500h13", "#222")],
  y15: [20, 20, tx(1, 10, 9, "T") + tx(8, 10, 6, "1:10") + ln("M2 13.500h16", "#222", 1) + ln("M2 17h16", "#222", 2)],
  brand: [
    36, 38,
    ln("M11 26V7c0-4 3-5 6-3l13 10c3 2 3 6 0 9L17 32c-5 4-10 1-10-4V6", "#ced3dc", 3) +
      ln("M2 8v20c0 6 5 9 10 8", "#ced3dc", 3) +
      fl("M15 14v9l7-5z", "#ced3dc") +
      ln("M24 14v8", "#ced3dc", 2),
  ],
  stSnap: [18, 16, '<path d="M2 2h12M2 6h12M2 10h12M2 14h12" stroke="#222" stroke-dasharray="1 3"/>'],
  stGrid: [18, 16, ln("M2.500 1v14M5.500 1v14M8.500 1v14M11.500 1v14M14.500 1v14M1 2.500h15M1 5.500h15M1 8.500h15M1 11.500h15", "#222")],
  stOrtho: [18, 16, ln("M4.500 0v12.500H16", "#555")],
  stPolar: [18, 16, '<circle cx="8" cy="9" r="5" fill="none" stroke="#234"/>' + ln("M8 9l7-6M8 9h7", "#234")],
  stOsnap: [18, 16, fl("M4 4h12v12H4z", "#fff") + ln("M4.500 16V4.500h12V16", "#345") + '<circle cx="4" cy="4" r="2" fill="#fff" stroke="#e05020"/>'],
  stTrack: [18, 16, ln("M14 2 4 12.500h12", "#234")],
  stDucs: [18, 16, ln("M3.500 1v14M3 15l10-8", "#234") + ln("M13 1v8M9 5h8", "#e0a020", 2)],
  stDyn: [18, 16, ln("M6.500 1v9M2 5.500h9M9 9h7v4H9z", "#123")],
  stLw: [18, 16, ln("M3 10h12M9 3v7", "#111", 2)],
  stQp: [18, 16, fl("M5 2h9v13H5z", "#eee") + ln("M5.500 2.500h8v12h-8zM7 5.500h5M7 8.500h5M7 11.500h5", "#222")],
  stModel: [14, 14, fl("M1 1h12v12H1z", "#eee") + ln("M1.500 1.500h11v11h-11zM5 5v5h4z", "#222")],
  stQuick: [18, 14, fl("M1 2h16v8H1z", "#eee") + ln("M1.500 2.500h7v7h-7zM9.500 2.500h7v7h-7z", "#222") + ln("M1 13h16", "#333", 2)],
  stNote: [14, 14, '<circle cx="7" cy="7" r="4" fill="none" stroke="#444" stroke-width="2"/>' + ln("M10 10l3 3M4 2l3 3", "#444", 2)],
};

const Icon = (props) => {
  const [width, height, innerHTML] = icons[props.name];
  return h("svg", {
    width,
    height,
    viewBox: `0 0 ${width} ${height}`,
    "aria-hidden": "true",
    innerHTML,
  });
};
Icon.props = ["name"];
</script>

<style>
body {
  background: #8e8e8e;
}
</style>

<style scoped>
.app {
  display: flex;
  flex-direction: column;
  height: 100vh;
  overflow: hidden;
  font: 12px/16px "Noto Sans", "Noto Sans CJK SC", sans-serif;
  color: #333;
}
.app * {
  box-sizing: border-box;
}
svg {
  flex: none;
  display: block;
}
button,
input,
select {
  font: inherit;
  color: inherit;
  margin: 0;
  padding: 0;
  border: 0;
  background: none;
  border-radius: 0;
}
select {
  appearance: none;
}
button {
  display: flex;
  align-items: center;
  justify-content: center;
  flex: none;
}
h1,
h2,
ul,
p {
  margin: 0;
  padding: 0;
  font-size: 12px;
  font-weight: normal;
  list-style: none;
}
a {
  color: inherit;
  text-decoration: none;
  white-space: nowrap;
}

/* title bar */
.titlebar {
  position: relative;
  display: flex;
  flex: none;
  height: 23px;
  padding-left: 36px;
  background: #e9e9e9;
}
.app-btn {
  position: absolute;
  z-index: 2;
  left: 0;
  top: 0;
  width: 36px;
  height: 40px;
  border: 1px solid #555;
  border-left: 0;
  background: linear-gradient(#999, #c0c0c0 50%, #7a7a7a);
  overflow: hidden;
}
.quick {
  display: flex;
  align-items: center;
  gap: 6px;
  width: 169px;
  padding-left: 7px;
  border: 1px solid #444;
  border-left: 0;
  background: #999;
  flex: none;
}
.quick > svg:nth-of-type(1) {
  margin-left: -2px;
}
.redo {
  display: flex;
  align-items: center;
  gap: 6px;
  height: 100%;
  width: 33px;
  padding-left: 2px;
  margin-left: -5px;
  background: #e2e2e2;
}
.redo + button {
  margin-left: -4px;
}
.title {
  display: flex;
  flex: 1;
  justify-content: center;
  gap: 24px;
  font-size: 15px;
  line-height: 24px;
  white-space: nowrap;
  color: #222;
  padding-left: 24px;
}
.help-search {
  display: flex;
  width: 47px;
  flex: none;
  border: 1px solid #555;
  border-right: 0;
  background: #fff;
}
.help-search button {
  width: 13px;
  background: #aaa;
}
.help-search input {
  width: 32px;
  padding-left: 2px;
  font-style: italic;
}

/* menu bar */
.menubar {
  display: flex;
  flex: none;
  gap: 13px;
  height: 20px;
  padding-left: 37px;
  border-bottom: 2px solid #909090;
  background: #f5f5f5;
  line-height: 17px;
  color: #111;
}
.menubar a {
  position: relative;
}
.menubar .open::after {
  content: "";
  position: absolute;
  left: 0;
  right: 0;
  bottom: -3px;
  height: 3px;
  background: #fafafa;
}

/* ribbon */
.ribbon {
  display: flex;
  flex: none;
  height: 101px;
  border-bottom: 7px solid #6c6c6c;
  background: #ededed;
  overflow: hidden;
}
.panel {
  display: flex;
  flex-direction: column;
  flex: none;
  border-right: 1px solid #aaa;
}
.nav-panel {
  width: 193px;
}
.view-panel {
  width: 251px;
}
.ucs-panel {
  width: 261px;
}
.port-panel {
  width: 150px;
}
.palette-panel {
  flex: 1 0 192px;
}
.panel-body {
  display: flex;
  height: 75px;
  padding-top: 3px;
  background: linear-gradient(#e9e9e9, #fafafa);
}
.panel h2 {
  display: flex;
  justify-content: center;
  align-items: center;
  position: relative;
  height: 19px;
  border-top: 1px solid #ddd;
  background: #ebebeb;
}
.panel h2 svg {
  position: absolute;
  right: 4px;
}
.rows {
  display: flex;
  flex-direction: column;
}
.row {
  display: flex;
  justify-content: flex-start;
  gap: 3px;
  height: 23px;
  white-space: nowrap;
}
.row svg:last-child:not(:first-child) {
  margin-left: 3px;
}
.off {
  color: #aaa;
}
.big {
  flex-direction: column;
  justify-content: flex-start;
  align-items: center;
  padding-top: 3px;
}
.big span {
  line-height: 14px;
  padding-top: 4px;
}
.wheel {
  width: 108px;
}
.wheel svg + span {
  padding-bottom: 5px;
}
.nav-panel .rows {
  padding-left: 4px;
}
.gallery {
  display: flex;
  width: 159px;
  height: 61px;
  margin: 4px 5px 0 2px;
  border: 1px solid #c4c4c4;
  background: #fff;
}
.gallery ul {
  flex: 1;
}
.gallery li {
  display: flex;
  align-items: center;
  gap: 3px;
  height: 20px;
  padding-left: 2px;
}
.gallery-scroll {
  display: flex;
  flex-direction: column;
  border-left: 1px solid #ccc;
}
.gallery-scroll button {
  flex: 1;
  width: 13px;
  border-bottom: 1px solid #ddd;
}
.view-panel .row {
  width: 83px;
  padding-left: 2px;
}
.view-panel .row.active {
  padding-left: 1px;
  border: 1px solid #4a86c0;
  background: linear-gradient(#b8d6f4, #92c0ee);
}
.ucs-grid {
  display: grid;
  grid-template-columns: repeat(3, 22px);
  align-content: start;
  margin: 0 5px 0 3px;
}
.ucs-grid button,
.ucs-col button {
  width: 22px;
  height: 23px;
  border: 1px solid #d2d2d2;
  background: #f7f7f7;
}
.ucs-col {
  margin-right: 2px;
}
.ucs-select {
  align-items: center;
  width: 160px;
  border: 1px solid #ccc;
  background: #f5f5f5;
}
.ucs-select select {
  flex: 1;
  margin-left: -3px;
}
.port-panel .rows {
  padding-left: 5px;
}
.port-panel .rows:first-child {
  width: 95px;
}
.palette-panel .panel-body {
  padding-left: 2px;
}
.palette-panel .big {
  width: 47px;
}

/* docked toolbars */
.strip {
  display: flex;
  flex: none;
  height: 57px;
  border-top: 1px solid #444;
  background: #555;
  gap: 2px;
}
.dock {
  display: flex;
  flex: none;
  padding-top: 2px;
  background: #dadada;
}
.dock-main {
  width: 340px;
  gap: 6px;
  padding-left: 2px;
}
.dock-layer {
  width: 306px;
  padding-left: 4px;
}
.dock-group {
  width: 192px;
  padding-left: 4px;
}
.dock-dim {
  flex: 1;
  min-width: 0;
  overflow: hidden;
  padding-left: 5px;
}
.grip {
  flex: none;
  width: 4px;
  margin: 2px 0;
  background: repeating-linear-gradient(#aaa 0 1px, transparent 1px 3px);
}
.logo {
  display: flex;
  align-items: center;
  width: 75px;
  gap: 7px;
}
.logo-side {
  display: flex;
  flex-direction: column;
  justify-content: space-between;
  height: 43px;
}
.dock-ctl {
  display: flex;
  flex-direction: column;
  justify-content: space-between;
  width: 13px;
  padding: 3px 0 6px 3px;
}
.tile {
  width: 38px;
  flex: none;
}
.face {
  width: 38px;
  height: 35px;
  border: 2px solid #f6f6f6;
  border-right-color: #aaa;
  border-bottom-color: #aaa;
  background: #e2e2e2;
}
.tile-label {
  height: 15px;
  background: #888;
  color: #fff;
  line-height: 15px;
  text-align: center;
}
.arrows {
  display: flex;
  justify-content: space-around;
}
.icon-col {
  display: flex;
  flex-direction: column;
  flex: none;
  width: 19px;
}
.icon-col button {
  height: 17px;
}
.hide-box {
  width: 52px;
  height: 51px;
  background: #f0f0f0;
}
.hide-box div {
  display: flex;
  justify-content: space-around;
  padding-top: 3px;
}
.mini-list {
  display: flex;
  width: 66px;
  height: 52px;
  border: 1px solid #aaa;
  background: #fff;
}
.mini-list ul {
  flex: 1;
}
.mini-list li {
  display: flex;
  align-items: center;
  gap: 2px;
  height: 17px;
  padding-left: 3px;
  white-space: nowrap;
  color: #111;
}
.mini-list li:first-child {
  background: #ddd;
}
.mini-scroll button {
  width: 15px;
  height: 17px;
  border: 1px solid #bbb;
  background: #eee;
}
.mini-list.groups {
  width: 98px;
  margin-left: 6px;
}
.groups span {
  flex: 1;
}
.dock-group .icon-col {
  margin-left: 6px;
}
.dock-layer .tile + .grip {
  margin: 2px 4px 2px 7px;
}
.layer-body {
  width: 228px;
}
.layer-top {
  display: flex;
  height: 33px;
  padding-left: 11px;
  gap: 16px;
}
.layer-find {
  width: 88px;
}
.layer-find label {
  display: flex;
  align-items: center;
  height: 17px;
  border: 1px solid #999;
}
.layer-find label input {
  width: 70px;
  padding-left: 4px;
  height: 15px;
}
.layer-find input::placeholder {
  color: #aaa;
}
.slider {
  display: flex;
  align-items: center;
  height: 15px;
  gap: 5px;
  font-size: 11px;
}
.slider input {
  width: 68px;
  height: 12px;
  appearance: none;
  background: linear-gradient(#333, #333) 0 4px / 100% 1px no-repeat;
}
.slider input::-webkit-slider-thumb {
  appearance: none;
  width: 8px;
  height: 6px;
  margin-top: 6px;
  background: #999;
  clip-path: polygon(50% 0, 100% 100%, 0 100%);
}
.layer-select {
  display: flex;
  align-items: center;
  height: 19px;
  padding-left: 7px;
  border: 1px solid #aaa;
  background: #fff;
}
.layer-select select {
  flex: 1;
}
.drop {
  display: flex;
  align-items: center;
  justify-content: center;
  width: 16px;
  height: 15px;
  margin-right: 1px;
  background: #ddd;
}
.dock-dim .tile + .grip {
  margin: 2px 5px;
}
.dim-grid {
  display: grid;
  grid-template-columns: repeat(3, 26px);
  grid-auto-rows: 26px;
  gap: 1px 2px;
}
.dim-grid button {
  border: 1px solid #555;
  border-radius: 3px;
  background: linear-gradient(#f2f2f2, #c8c8c8);
}

/* file tabs */
.file-tabs {
  display: flex;
  flex: none;
  height: 22px;
  padding-left: 9px;
  border-top: 1px solid #555;
  background: linear-gradient(
    #8f8f8f 14px,
    #666 14px 15px,
    #fff 15px 18px,
    #8a8a8a 18px
  );
}
.file-tabs a {
  display: flex;
  align-items: center;
  justify-content: space-between;
  width: 140px;
  height: 14px;
  padding: 0 5px 0 8px;
  border-right: 1px solid #555;
  background: #8c8c8c;
}
.file-tabs .current {
  background: #ededed;
  font: 10px "Liberation Mono", monospace;
}

/* drawing area */
.work {
  display: flex;
  flex: 1;
  min-height: 0;
}
.side {
  display: flex;
  flex-direction: column;
  flex: none;
  width: 77px;
  border-right: 2px solid #888;
  background: #f1f1f1;
  color: #111;
}
.side h2 {
  display: flex;
  gap: 5px;
  height: 23px;
  background: #a2a2a2;
  font-size: 14px;
  line-height: 23px;
  color: #222;
}
.side h2 .grip {
  width: 3px;
  margin: 4px 0 8px;
}
.flip {
  justify-content: flex-start;
  margin: 7px 0 1px;
}
.side ul {
  display: flex;
  flex-direction: column;
  flex-basis: 0;
}
.side .g16 {
  flex-grow: 16;
}
.side .g3 {
  flex-grow: 3;
  margin-top: 2px;
  border-top: 2px solid #999;
}
.side .g7 {
  flex-grow: 7;
  margin-top: 2px;
  padding-top: 2px;
  border-top: 1px solid #aaa;
}
.side li {
  display: flex;
  align-items: center;
  gap: 9px;
  flex: 1 0 0;
  min-height: 0;
}
.side li svg {
  width: 14px;
}
.canvas {
  position: relative;
  flex: 1;
  background: #000;
}
.drawing {
  width: 100%;
  height: 100%;
}
.ucs {
  position: absolute;
  left: 29px;
  bottom: 28px;
}

/* bottom docks */
.bottom {
  position: relative;
  display: flex;
  flex: none;
  height: 80px;
  border-top: 2px solid #ccc;
  border-bottom: 2px solid #555;
  background: #8c8c8c;
}
.left-dock {
  display: flex;
  flex-direction: column;
  flex: none;
  width: 312px;
  margin-right: 4px;
  border-top: 1px solid #555;
  background: #dedede;
}
.layout-tabs {
  display: flex;
  height: 15px;
  border-bottom: 1px solid #555;
  background: #f2f2f2;
  line-height: 14px;
  color: #111;
}
.layout-tabs button {
  width: 13px;
  border-right: 1px solid #bbb;
}
.layout-tabs a {
  padding: 0 8px 0 5px;
  background: linear-gradient(110deg, transparent 0 92%, #555 92% 95%, transparent 95%);
}
.layout-tabs .model {
  padding: 0 10px;
  background: #000;
  color: #fff;
  font-weight: bold;
  clip-path: polygon(0 0, 100% 0, 88% 100%, 14% 100%);
}
.scale-bar {
  display: flex;
  align-items: center;
  height: 44px;
  padding-left: 2px;
  gap: 8px;
}
.combos {
  display: flex;
  flex-direction: column;
  gap: 2px;
  width: 97px;
  border-right: 1px solid #888;
}
.combos label {
  display: flex;
  height: 18px;
  gap: 2px;
  align-items: center;
  color: #111;
}
.combo {
  display: flex;
  align-items: center;
  width: 62px;
  height: 17px;
  padding-right: 3px;
  border: 1px solid #aaa;
  background: linear-gradient(90deg, #fff 46px, #ddd 46px);
}
.combo select {
  flex: 1;
  width: 40px;
  padding-left: 2px;
  font: 10px "Liberation Mono", monospace;
  color: #111;
}
.scale-bar .face {
  height: 38px;
}
.quad {
  display: grid;
  grid-template-columns: 19px 19px;
  grid-auto-rows: 18px;
  border: 1px solid #ccc;
  background: #fff;
  font: 11px "Liberation Serif", serif;
  color: #777;
}
.quad .blue {
  color: #1a4f9c;
}
.quad button:nth-child(n + 3) {
  background: #e4e4e4;
}
.quad-side {
  display: flex;
  flex-direction: column;
  gap: 6px;
}
.coords {
  width: 307px;
  height: 13px;
  padding-left: 3px;
  background: #333;
  color: #fff;
  font: 10px/13px "Liberation Sans", sans-serif;
}
.elev-dock {
  display: flex;
  flex: none;
  width: 325px;
  border: 1px solid #555;
  background: #8f8f8f;
}
.elev-ctl {
  width: 13px;
  padding: 8px 0 0 3px;
  background: #ccc;
}
.elev {
  display: grid;
  grid-template: 39px 18px 18px / 54px 31px;
  align-items: center;
  justify-items: center;
  margin: 0 3px;
  background: #a8a8a8;
}
.screen {
  width: 50px;
  height: 36px;
  border-radius: 5px;
  background: #bdbdbd;
}
.elev input {
  width: 68px;
  height: 15px;
  padding-left: 4px;
  justify-self: start;
  background: #fff;
  font: 11px "Liberation Mono", monospace;
  color: #111;
}
.elev input + svg {
  justify-self: end;
  margin-right: 3px;
}
.elev-name {
  width: 54px;
  height: 18px;
  background: #686868;
  border: 1px solid #ddd;
  color: #fff;
  text-align: center;
}
.pad {
  width: 66px;
  padding: 6px 2px 4px;
  background: #e4e4e4;
}
.pad-case {
  display: grid;
  grid-template-columns: 35px 15px;
  gap: 5px 0;
  height: 66px;
  padding: 4px 6px;
  border-radius: 6px;
  background: #666;
}
.pad-case > svg {
  grid-column: 1 / 3;
}
.pad-keys {
  display: grid;
  grid-template-columns: 14px 14px;
  grid-auto-rows: 10px;
  gap: 2px 4px;
}
.pad-keys button {
  border-radius: 3px;
  background: #aaa;
}
.pad-keys .lit {
  background: #f4f4f4;
}
.pad-side {
  display: flex;
  flex-direction: column;
  gap: 5px;
}
.symbols {
  display: grid;
  grid-template-columns: repeat(5, 23px);
  grid-auto-rows: 23px;
  gap: 2px;
  padding: 2px 0 0 6px;
}
.symbols button {
  border: 1px solid #fafafa;
  border-right-color: #666;
  border-bottom-color: #666;
  background: #dcdcdc;
}
.symbols-side {
  display: flex;
  flex-direction: column;
  gap: 5px;
  padding: 39px 0 0 2px;
}
.command {
  flex: 1;
  min-width: 0;
  margin: 3px 0 1px 4px;
  border-left: 1px solid #444;
  background: #fff;
  font: 14px/15px "Liberation Mono", "Noto Sans CJK SC", monospace;
  color: #222;
}
.history {
  height: 54px;
  padding-top: 2px;
  border-bottom: 1px solid #bbb;
}
.history p {
  font-size: 14px;
  white-space: pre;
}
.prompt {
  display: flex;
  align-items: center;
  height: 19px;
}
.prompt input {
  flex: 1;
  min-width: 0;
}
.brand {
  position: absolute;
  right: 55px;
  bottom: 2px;
  display: flex;
  align-items: center;
  gap: 12px;
  width: 180px;
  height: 85px;
  padding-left: 14px;
  background: #233056;
  color: #ced3dc;
}
.brand div {
  display: flex;
  flex-direction: column;
}
.brand strong {
  font-size: 26px;
  line-height: 28px;
}
.brand span {
  font-size: 13px;
  line-height: 16px;
}

/* status bar */
.status {
  display: flex;
  flex: none;
  height: 17px;
  overflow: hidden;
  background: linear-gradient(#8a8a8a, #a4a4a4);
}
.status output {
  width: 108px;
  padding-left: 7px;
  font: 11px/24px "DejaVu Sans", sans-serif;
  color: #222;
}
.status button {
  width: 21px;
  border-right: 1px solid #777;
  background: #a6a6a6;
}
.status .on {
  background: linear-gradient(#e0f0f8, #8cc4de);
}
.status-right {
  display: flex;
  margin-left: auto;
}
.status-right span {
  width: 17px;
}
.status-right button {
  background: #bbb;
}
</style>
